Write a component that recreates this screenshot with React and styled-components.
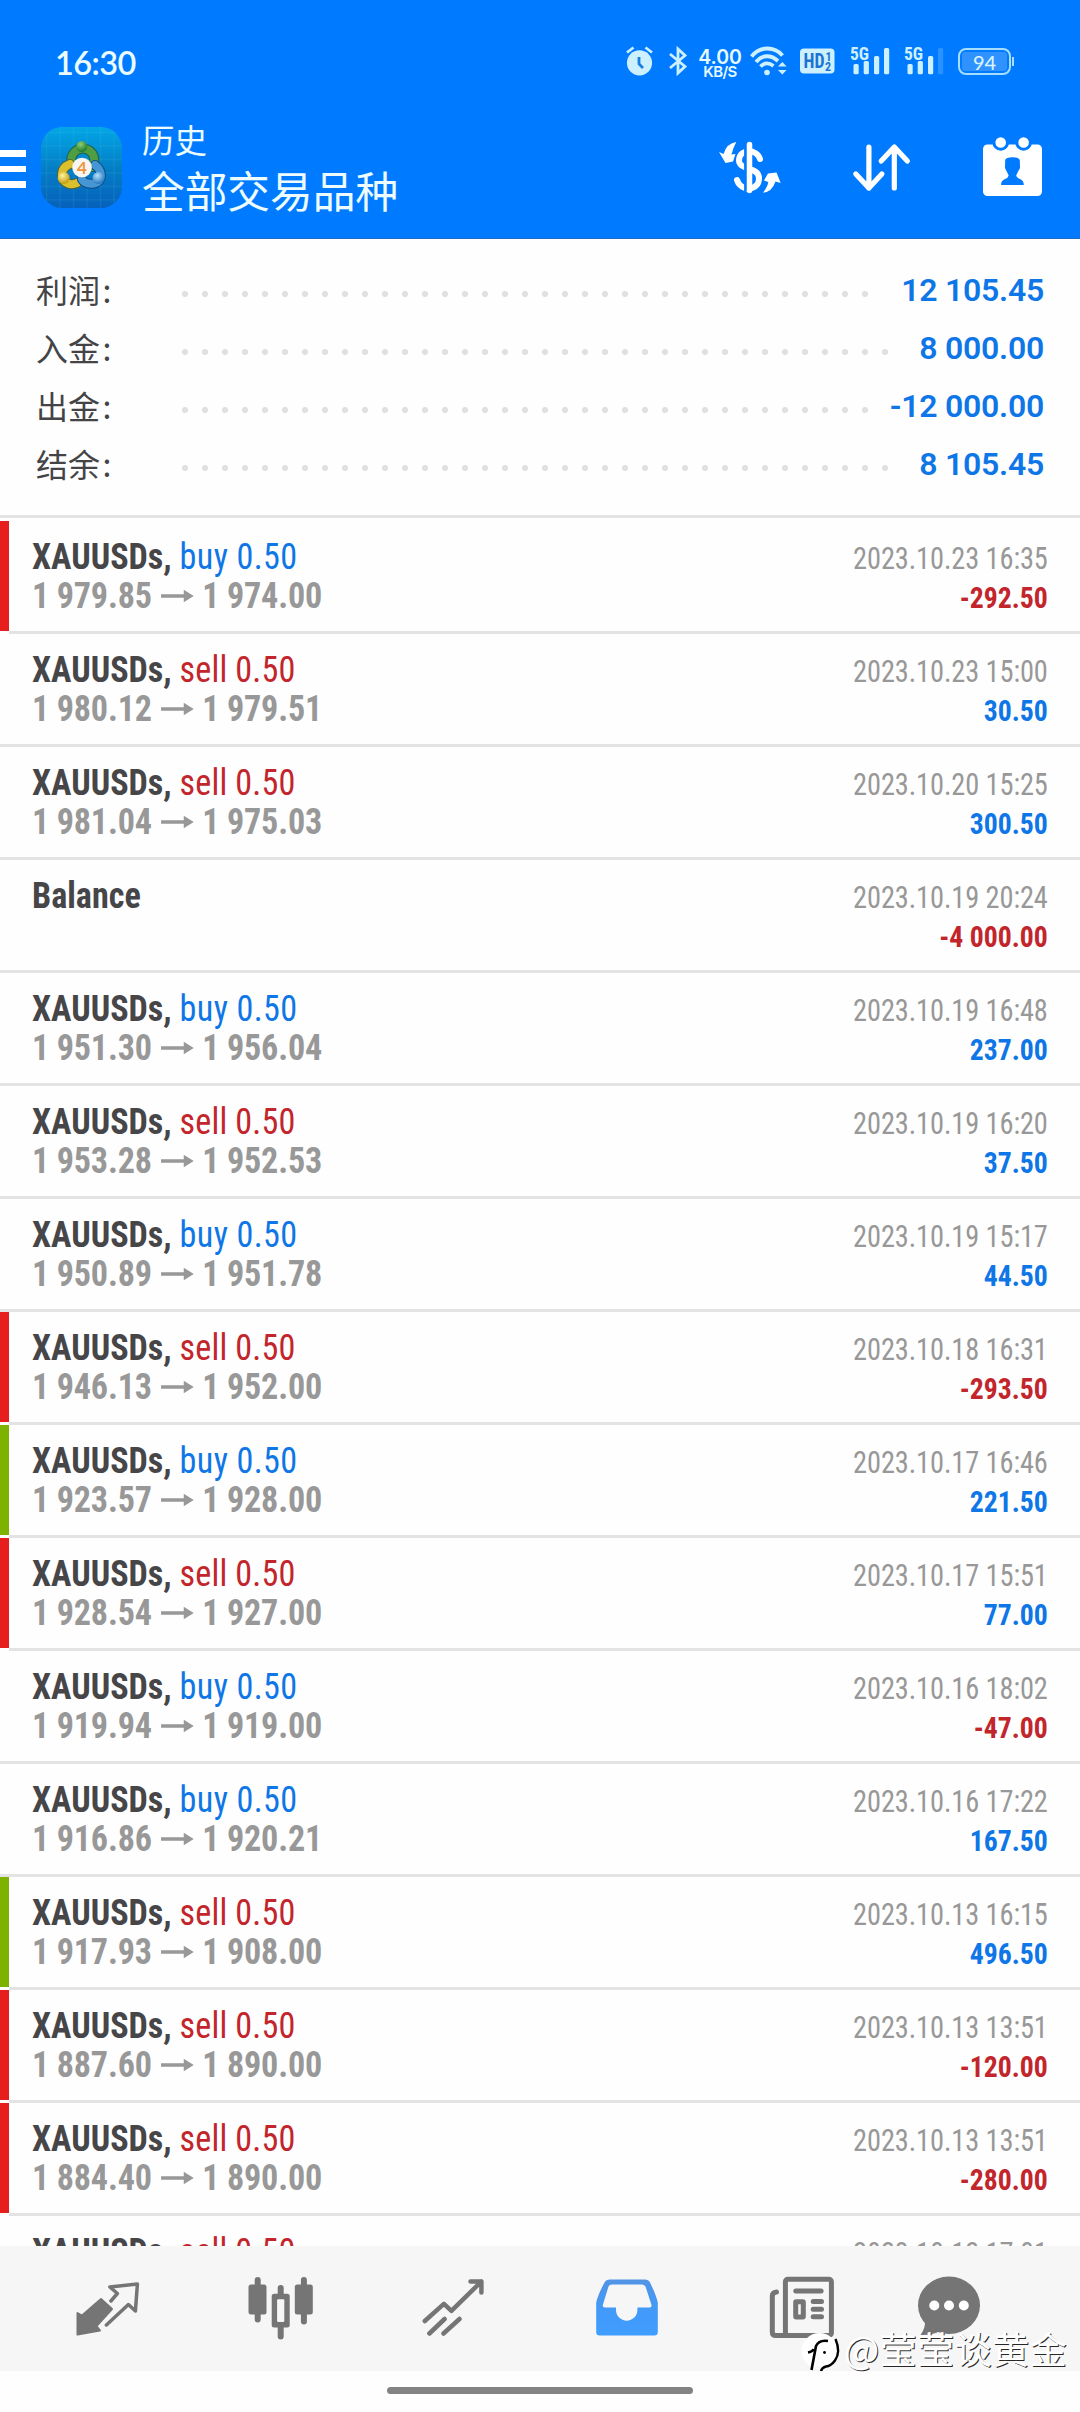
import React from "react";
import styled, { createGlobalStyle } from "styled-components";

const BLUE = "#0e76e6";
const RED = "#c2252b";
const ICE = "#cdf0ff";
const BRAND = "#007bff";
const GREY = "#757575";
const CJK = `Roboto, "Noto Sans CJK SC", sans-serif`;

const GlobalStyle = createGlobalStyle`
  * { box-sizing: border-box; }
  body { margin: 0; background: #fefefe; }
  svg { display: block; flex: none; overflow: visible; }
`;

const Screen = styled.main`
  position: relative;
  width: 1080px;
  height: 2412px;
  display: flex;
  flex-direction: column;
  overflow: hidden;
  background: #fefefe;
  font-family: ${CJK};
`;

const TopArea = styled.header`
  height: 239px;
  flex: none;
  background: ${BRAND};
  border-bottom: 1px solid #1c69c6;
`;

const StatusBar = styled.div`
  height: 122px;
  padding: 0 69px 0 55px;
  display: flex;
  align-items: center;
`;

const Clock = styled.time`
  font: 600 32.5px/40px Lato, sans-serif;
  letter-spacing: -0.6px;
  color: #eafcff;
  padding-top: 4px;
`;

const StatusIcons = styled.div`
  margin-left: auto;
  display: flex;
  align-items: center;
  color: ${ICE};
`;

const StatusIcon = styled.svg`
  margin-left: ${(p) => p.$gap || 0}px;
`;

const NetSpeed = styled.div`
  width: 44px;
  margin-left: 11px;
  padding-top: 5px;
  display: flex;
  flex-direction: column;
  align-items: center;
  color: #e6faff;
  font-family: Inter, sans-serif;
  font-weight: 600;
`;
const SpeedValue = styled.span`
  font-size: 19.5px;
  line-height: 16px;
`;
const SpeedUnit = styled.span`
  font-size: 15px;
  line-height: 14px;
  letter-spacing: -0.6px;
`;

const Battery = styled.div`
  position: relative;
  width: 53px;
  height: 27px;
  margin-left: 14px;
  padding: 2px;
  border: 2px solid #a5deff;
  border-radius: 8px;
  display: flex;
  &::after {
    content: "";
    position: absolute;
    right: -5px;
    top: 7px;
    width: 2px;
    height: 9px;
    background: #a5deff;
  }
`;
const Charge = styled.span`
  flex: 1;
  border-radius: 3px;
  background: #3092ff;
  color: #d8f4ff;
  font: 500 20px/20px Lato, sans-serif;
  text-align: center;
`;

const TitleBar = styled.div`
  height: 116px;
  display: flex;
  align-items: flex-start;
`;

const MenuButton = styled.div`
  width: 26px;
  margin-top: 28px;
  display: flex;
  flex-direction: column;
  gap: 9px;
`;
const MenuLine = styled.span`
  height: 6.6px;
  background: #fff;
`;

const AppIcon = styled.svg`
  margin: 5px 0 0 15px;
`;

const Titles = styled.div`
  margin: -3px 0 0 20px;
  width: 300px;
  color: #ecfcff;
  font-family: "Noto Sans CJK SC", sans-serif;
  font-weight: 400;
`;
const Caption = styled.div`
  font-size: 32.5px;
  line-height: 40px;
`;
const Heading = styled.h1`
  margin: 2px 0 0;
  font-size: 42.7px;
  line-height: 56px;
  font-weight: 400;
`;

const Actions = styled.div`
  margin: 13px 36px 0 auto;
  display: flex;
  align-items: flex-start;
`;
const ActionIcon = styled.svg`
  margin-left: ${(p) => p.$gap || 0}px;
`;

const Summary = styled.section`
  flex: none;
  height: 279px;
  padding: 22px 36px 0 36px;
  border-bottom: 3px solid #e3e3e3;
`;
const SummaryRow = styled.div`
  height: 58px;
  display: flex;
  align-items: center;
`;
const SummaryLabel = styled.span`
  width: 138.6px;
  margin-top: -3px;
  color: #444447;
  font: 400 32px/56px "Noto Sans CJK SC", sans-serif;
`;
const Colon = styled.span`
  margin-left: 2.5px;
`;
const Leader = styled.span`
  width: ${(p) => p.$dots * 20}px;
  height: 20px;
  margin-top: 8px;
  background: radial-gradient(circle, #e0e0e0 2.7px, transparent 3.5px) 0 0 / 20px 20px;
`;
const SummaryValue = styled.span`
  margin-left: auto;
  color: ${BLUE};
  font: 650 32px/58px Roboto, sans-serif;
  letter-spacing: -0.25px;
`;

const List = styled.section`
  flex: none;
  height: 1728px;
  padding-top: 3px;
  overflow: hidden;
`;
const Row = styled.article`
  height: 113px;
  display: grid;
  grid-template-columns: 9px 1fr auto;
  grid-template-rows: 110px 3px;
  font-family: "Roboto Condensed", Roboto, sans-serif;
  font-stretch: 75%;
`;
const Marker = styled.span`
  background: ${(p) => p.$color || "transparent"};
`;
const Divider = styled.span`
  grid-column: ${(p) => (p.$inset ? "2 / 4" : "1 / 4")};
  grid-row: 2;
  background: #e3e3e3;
`;
const Deal = styled.div`
  padding: 16px 0 0 23px;
  transform: scaleX(0.935);
  transform-origin: 23px 0;
  font-size: 36.5px;
  line-height: 39px;
  font-weight: 700;
  white-space: nowrap;
`;
const Symbol = styled.div`
  color: #464649;
`;
const Side = styled.span`
  color: ${(p) => (p.$side === "buy" ? BLUE : RED)};
  font-weight: 450;
  letter-spacing: ${(p) => (p.$side === "buy" ? 0.4 : 0.15)}px;
`;
const Prices = styled.div`
  display: flex;
  align-items: center;
  color: #989898;
  letter-spacing: -0.2px;
`;
const PriceArrow = styled.svg`
  margin: 0 9px 0 10px;
`;
const Result = styled.div`
  padding: 18px 32px 0 0;
  text-align: right;
  transform: scaleX(0.915);
  transform-origin: calc(100% - 32px) 0;
  line-height: 39px;
`;
const Stamp = styled.div`
  color: #989898;
  font-size: 31px;
  letter-spacing: -0.1px;
`;
const Profit = styled.div`
  color: ${(p) => (p.$loss ? RED : BLUE)};
  font-size: 30.3px;
  font-weight: 700;
`;

const Nav = styled.nav`
  flex: none;
  height: 125px;
  padding-left: 22px;
  background: #f6f6f6;
  display: grid;
  grid-template-columns: repeat(5, 173px) 124px;
  align-items: center;
  justify-items: center;
`;

const GestureArea = styled.footer`
  flex: 1;
  display: flex;
  justify-content: center;
  padding-top: 16px;
`;
const GestureBar = styled.span`
  width: 306px;
  height: 7px;
  border-radius: 4px;
  background: #838383;
`;

const Watermark = styled.div`
  position: absolute;
  left: 801px;
  top: 2325px;
  display: flex;
  align-items: center;
  gap: 6px;
  color: #fff;
  font: 400 37.3px/46px "Noto Sans CJK SC", sans-serif;
  text-shadow: 1px 1px 0 rgba(0, 0, 0, 0.85);
  white-space: nowrap;
`;
const Handle = styled.span`
  letter-spacing: 0.2px;
`;

const R = "#e61e1e";
const G = "#7db200";

const summary = [
  ["利润", 35, "12 105.45"],
  ["入金", 36, "8 000.00"],
  ["出金", 35, "-12 000.00"],
  ["结余", 36, "8 105.45"],
];

const deals = [
  ["buy", "1 979.85", "1 974.00", "2023.10.23 16:35", "-292.50", R],
  ["sell", "1 980.12", "1 979.51", "2023.10.23 15:00", "30.50"],
  ["sell", "1 981.04", "1 975.03", "2023.10.20 15:25", "300.50"],
  [null, "", "", "2023.10.19 20:24", "-4 000.00"],
  ["buy", "1 951.30", "1 956.04", "2023.10.19 16:48", "237.00"],
  ["sell", "1 953.28", "1 952.53", "2023.10.19 16:20", "37.50"],
  ["buy", "1 950.89", "1 951.78", "2023.10.19 15:17", "44.50"],
  ["sell", "1 946.13", "1 952.00", "2023.10.18 16:31", "-293.50", R],
  ["buy", "1 923.57", "1 928.00", "2023.10.17 16:46", "221.50", G],
  ["sell", "1 928.54", "1 927.00", "2023.10.17 15:51", "77.00", R],
  ["buy", "1 919.94", "1 919.00", "2023.10.16 18:02", "-47.00"],
  ["buy", "1 916.86", "1 920.21", "2023.10.16 17:22", "167.50"],
  ["sell", "1 917.93", "1 908.00", "2023.10.13 16:15", "496.50", G],
  ["sell", "1 887.60", "1 890.00", "2023.10.13 13:51", "-120.00", R],
  ["sell", "1 884.40", "1 890.00", "2023.10.13 13:51", "-280.00", R],
  ["sell", "", "", "2023.10.12 17:01", ""],
];

const Alarm = () => (
  <StatusIcon width="27" height="30" viewBox="0 0 27 30">
    <circle cx="13.5" cy="16.8" r="12.6" fill="currentColor" />
    <path d="M1 6.5 7.5 1.5M26 6.5 19.500 1.500" stroke="currentColor" strokeWidth="2.8" fill="none" />
    <path d="M13 11v7l4 4" stroke="#1a7fe0" strokeWidth="2.8" fill="none" />
  </StatusIcon>
);
const Bluetooth = () => (
  <StatusIcon $gap={16} width="18" height="30" viewBox="0 0 18 30">
    <path d="M1 8 16 20.500 9 27V3l7 6.500L1 22" stroke="currentColor" strokeWidth="2.8" fill="none" />
  </StatusIcon>
);
const Wifi = () => (
  <StatusIcon $gap={8} width="37" height="30" viewBox="0 0 37 30">
    <g stroke="currentColor" strokeWidth="3.800" fill="none">
      <path d="M1.500 10.500C10 0 24 0 32.500 9.500" />
      <path d="M6 16C12 8.500 21 8.500 28 15" />
      <path d="M10.500 20.500C14.500 16.500 19 16.500 23.500 20" />
    </g>
    <circle cx="17" cy="26.500" r="2.800" fill="currentColor" />
    <path d="m28 20.500 4.300-4.500 4.300 4.500zM28 24l4.300 4.500L36.600 24z" fill="currentColor" />
  </StatusIcon>
);
const HdBadge = () => (
  <StatusIcon $gap={13} width="35" height="26" viewBox="0 0 35 26">
    <rect width="34.500" height="25" y="0.500" rx="4" fill="currentColor" />
    <g fill="#1c74d2" fontFamily="Roboto" fontWeight="700" fontStretch="75%">
      <text x="3.500" y="20" fontSize="20" textLength="21" lengthAdjust="spacingAndGlyphs">HD</text>
      <text x="25.500" y="12.500" fontSize="12">1</text>
      <text x="25" y="23" fontSize="12">2</text>
    </g>
  </StatusIcon>
);
const Signal = ({ gap, weak }) => (
  <StatusIcon $gap={gap} width="40" height="28" viewBox="0 0 40 28">
    <g fill="currentColor">
      <rect x="3.500" y="17" width="5.200" height="10.300" rx="1.500" />
      <rect x="13.700" y="14" width="5.200" height="13.300" rx="1.500" />
      <rect x="24" y="9" width="5.200" height="18.300" rx="1.500" />
      <rect x="34" y="1" width="5.200" height="26.300" rx="1.500" opacity={weak ? 0.2 : 1} />
      <text y="13" fontFamily="Roboto" fontStretch="75%" fontWeight="700" fontSize="17.500" stroke={BRAND} strokeWidth="2" paintOrder="stroke">5G</text>
    </g>
  </StatusIcon>
);

const Logo = () => (
  <AppIcon width="81" height="81" viewBox="0 0 81 81">
    <defs>
      <linearGradient id="tile" x1="0" y1="0" x2="0" y2="1">
        <stop offset="0" stopColor="#02a6e6" />
        <stop offset="0.5" stopColor="#047fc6" />
        <stop offset="1" stopColor="#0660ba" />
      </linearGradient>
      <pattern id="grid" width="13.500" height="13.500" patternUnits="userSpaceOnUse">
        <path d="M0 5.500h13.500M5.500 0v13.500" stroke="#4cc7ee" strokeOpacity="0.2" strokeWidth="0.800" />
      </pattern>
      <radialGradient id="ballGreen" cx=".4" cy=".3" r=".7"><stop offset="0" stopColor="#8fcf74" /><stop offset="1" stopColor="#1f7a2b" /></radialGradient>
      <radialGradient id="ballYellow" cx=".4" cy=".3" r=".7"><stop offset="0" stopColor="#fff49a" /><stop offset="1" stopColor="#c19a0c" /></radialGradient>
      <radialGradient id="ballBlue" cx=".4" cy=".3" r=".7"><stop offset="0" stopColor="#b4e2fb" /><stop offset="1" stopColor="#2277be" /></radialGradient>
    </defs>
    <rect width="81" height="81" rx="21" fill="url(#tile)" />
    <rect width="81" height="81" rx="21" fill="url(#grid)" />
    <g strokeLinecap="round" fill="none">
      <path d="M31 37a11.500 11.500 0 1 1 20 3" stroke="#1c5b50" strokeWidth="10" />
      <path d="M31 37a11.500 11.500 0 1 1 20 3" stroke="#4f9f42" strokeWidth="8" />
      <path d="M29 37C19 41 18 53 27 56.500q4 1.500 9-.5" stroke="#4c6440" strokeWidth="10" />
      <path d="M29 37C19 41 18 53 27 56.500q4 1.500 9-.5" stroke="#d9c02c" strokeWidth="8" />
      <path d="M54 38c8 6 8 17-1 18.500q-9 1-12-4" stroke="#0c4a86" strokeWidth="10" />
      <path d="M54 38c8 6 8 17-1 18.500q-9 1-12-4" stroke="#4596d3" strokeWidth="8" />
    </g>
    <circle cx="40.700" cy="19.500" r="5.500" fill="url(#ballGreen)" />
    <circle cx="22.700" cy="51" r="6" fill="url(#ballYellow)" />
    <circle cx="57.500" cy="51" r="6" fill="url(#ballBlue)" />
    <circle cx="41" cy="40.500" r="9.800" fill="#f7f6f1" />
    <text x="41" y="46.500" textAnchor="middle" fontFamily="Lato" fontSize="17" fontWeight="700" fill="#ef953f">4</text>
  </AppIcon>
);

const CurrencySwap = () => (
  <ActionIcon width="62" height="62" viewBox="719 135 62 62">
    <path d="M760 159C757 149 740 148 739 160 738.500 171 759 166 759 178.500 759 191 741 192 737 180" stroke="#fff" strokeWidth="6" strokeLinecap="round" fill="none" />
    <path d="M745.600 146v45" stroke={BRAND} strokeWidth="3" />
    <path d="M749.500 144.500v46" stroke="#fff" strokeWidth="5.500" strokeLinecap="round" />
    <path d="M736.300 142Q733 148 731.500 154.500L735.500 154 733 161.500 725.500 163 719 152 723.500 154Q727 143 736.300 142ZM763 192.700Q767.500 187 768.300 182L764 180.500 768 173.500 776.500 172.500 780.700 183 775.500 181.500Q772 192 763 192.700Z" fill="#fff" />
  </ActionIcon>
);
const SortArrows = () => (
  <ActionIcon $gap={72} width="58" height="62" viewBox="853 135 58 62">
    <path d="M868.900 147v41M855.800 174l13.100 14 13-14M894.300 188v-41M881.200 161l13.100-14 13 14" stroke="#fff" strokeWidth="5.200" strokeLinecap="round" strokeLinejoin="round" fill="none" />
  </ActionIcon>
);
const CalendarUser = () => (
  <ActionIcon $gap={72} width="61" height="62" viewBox="983 135 61 62">
    <rect x="983" y="144.500" width="59" height="51.500" rx="4.500" fill="#fff" />
    <g fill="#fff" stroke={BRAND} strokeWidth="3">
      <circle cx="1000.700" cy="142.500" r="6.800" />
      <circle cx="1023.600" cy="142.500" r="6.800" />
    </g>
    <path d="M1005.200 160Q1006 157.200 1012.500 157.200T1019.800 160L1020 168Q1017 173.500 1016.200 175.500 1017 178 1020 179 1023.800 180.500 1023.800 185H1001Q1001 180.500 1005 179 1008 178 1008.700 175.500 1007.500 173 1005 168Z" fill={BRAND} />
  </ActionIcon>
);

const NavIcon = ({ cx, children }) => (
  <svg width="70" height="70" viewBox={`${cx - 35} 2273.500 70 70`} fill="none" strokeLinecap="round" strokeLinejoin="round">
    {children}
  </svg>
);

const Quotes = () => (
  <NavIcon cx={109}>
    <path d="M77.500 2312.500l4.500 2.500 19-16.500 11 10-15.500 17 3.500 4.500-22.500 4z" fill={GREY} stroke={GREY} strokeWidth="2" />
    <path d="M110.900 2300.500l6.500-7.500-7.500-6.500 27.500-3-2 27-7-6.500-22 20.500" stroke={GREY} strokeWidth="3.500" />
  </NavIcon>
);
const Candles = () => (
  <NavIcon cx={281.5}>
    <path d="M257.200 2279.500v39.500M280.200 2287.500v48.500M303.400 2279.500v41.500" stroke={GREY} strokeWidth="6" />
    <rect x="248" y="2284" width="18" height="30" rx="2.500" fill={GREY} />
    <rect x="294.300" y="2284" width="18" height="30" rx="2.500" fill={GREY} />
    <rect x="271.200" y="2293.200" width="18" height="33.800" rx="2.500" fill={GREY} />
    <rect x="276.600" y="2298.700" width="7.200" height="22.800" rx="1" fill="#f6f6f6" />
  </NavIcon>
);
const Trend = () => (
  <NavIcon cx={455}>
    <path d="M424.800 2320.500l19.100-17.200 7.500 7 30-29.300M470.500 2281h10.900v11M429.400 2333l15.200-14.500M443.500 2333l16-14.500" stroke={GREY} strokeWidth="4.500" />
  </NavIcon>
);
const Inbox = () => (
  <NavIcon cx={628}>
    <defs>
      <linearGradient id="tray" x1="0" y1="0" x2="0" y2="1">
        <stop offset="0" stopColor="#5294e6" />
        <stop offset="0.5" stopColor="#4299f8" />
        <stop offset="1" stopColor="#409dff" />
      </linearGradient>
    </defs>
    <path fillRule="evenodd" fill="url(#tray)" d="M610 2279H645Q648.500 2279 650 2282 656 2294 657.800 2302V2331.500Q657.800 2335 654.300 2335H599.700Q596.200 2335 596.200 2331.500V2302Q598 2294 604.500 2282 606 2279 610 2279ZM612 2284Q609.500 2284 608.500 2286L602.800 2304.500Q602.500 2307 605 2307H616V2309.500A10.700 10.700 0 0 0 637.400 2309.500V2307H649.500Q652 2307 651.500 2304.500L645.500 2286Q644 2284 642 2284Z" />
  </NavIcon>
);
const News = () => (
  <NavIcon cx={800.5}>
    <g stroke={GREY} strokeWidth="5">
      <rect x="784.900" y="2278.700" width="46" height="56.300" rx="2.500" />
      <path d="M776 2291.500q-4.200.5-4.200 4V2331.500q0 3.500 3.500 3.500H786M795.300 2290.500h25.300M812.700 2301h8.300M812.700 2308.700h8.300M812.700 2316.300h8.300" />
      <rect x="795.200" y="2301.200" width="7.600" height="15.300" rx="0.500" />
    </g>
  </NavIcon>
);
const Chat = () => (
  <NavIcon cx={949}>
    <ellipse cx="949" cy="2304.800" rx="31" ry="28.700" fill={GREY} />
    <path d="M925 2319q1 8-4.500 15.500 11 .5 20-4z" fill={GREY} />
    <g fill="#fff">
      <circle cx="934.300" cy="2305" r="5" />
      <circle cx="949" cy="2305" r="5" />
      <circle cx="963.800" cy="2305" r="5" />
    </g>
  </NavIcon>
);

const WatermarkLogo = () => (
  <svg width="37" height="44" viewBox="0 0 37 44">
    <circle cx="18.500" cy="25" r="18" fill="#fff" />
    <path d="M34.500 13q5.500 13-.5 21.500-4 5.500-9 6-4 1-5 4.500" stroke="#000" strokeWidth="2.400" fill="none" />
    <path d="M27 15q-9-1.500-12 5l-4.500 24M7 26.500q5-1 5.500-3.500" stroke="#000" strokeWidth="2.600" fill="none" />
    <circle cx="23.500" cy="26.500" r="1.400" fill="#000" />
  </svg>
);

export default function App() {
  return (
    <Screen>
      <GlobalStyle />
      <TopArea>
        <StatusBar>
          <Clock>16:30</Clock>
          <StatusIcons>
            <Alarm />
            <Bluetooth />
            <NetSpeed>
              <SpeedValue>4.00</SpeedValue>
              <SpeedUnit>KB/S</SpeedUnit>
            </NetSpeed>
            <Wifi />
            <HdBadge />
            <Signal gap={15} />
            <Signal gap={14} weak />
            <Battery>
              <Charge>94</Charge>
            </Battery>
          </StatusIcons>
        </StatusBar>
        <TitleBar>
          <MenuButton>
            <MenuLine />
            <MenuLine />
            <MenuLine />
          </MenuButton>
          <Logo />
          <Titles>
            <Caption>历史</Caption>
            <Heading>全部交易品种</Heading>
          </Titles>
          <Actions>
            <CurrencySwap />
            <SortArrows />
            <CalendarUser />
          </Actions>
        </TitleBar>
      </TopArea>

      <Summary>
        {summary.map(([label, dots, value]) => (
          <SummaryRow key={label}>
            <SummaryLabel>
              {label}
              <Colon>:</Colon>
            </SummaryLabel>
            <Leader $dots={dots} />
            <SummaryValue>{value}</SummaryValue>
          </SummaryRow>
        ))}
      </Summary>

      <List>
        {deals.map(([side, open, close, time, profit, marker], i) => (
          <Row key={i}>
            <Marker $color={marker} />
            <Deal>
              <Symbol>
                {side ? "XAUUSDs, " : "Balance"}
                {side && <Side $side={side}>{side} 0.50</Side>}
              </Symbol>
              {open && (
                <Prices>
                  {open}
                  <PriceArrow width="35" height="14" viewBox="0 0 36 14">
                    <path d="M0 5.300h25V.5L36 7 25 13.500V8.700H0z" fill="#989898" />
                  </PriceArrow>
                  {close}
                </Prices>
              )}
            </Deal>
            <Result>
              <Stamp>{time}</Stamp>
              <Profit $loss={profit.startsWith("-")}>{profit}</Profit>
            </Result>
            <Divider $inset={Boolean(marker)} />
          </Row>
        ))}
      </List>

      <Nav>
        <Quotes />
        <Candles />
        <Trend />
        <Inbox />
        <News />
        <Chat />
      </Nav>
      <GestureArea>
        <GestureBar />
      </GestureArea>

      <Watermark>
        <WatermarkLogo />
        <Handle>@莹莹谈黄金</Handle>
      </Watermark>
    </Screen>
  );
}
